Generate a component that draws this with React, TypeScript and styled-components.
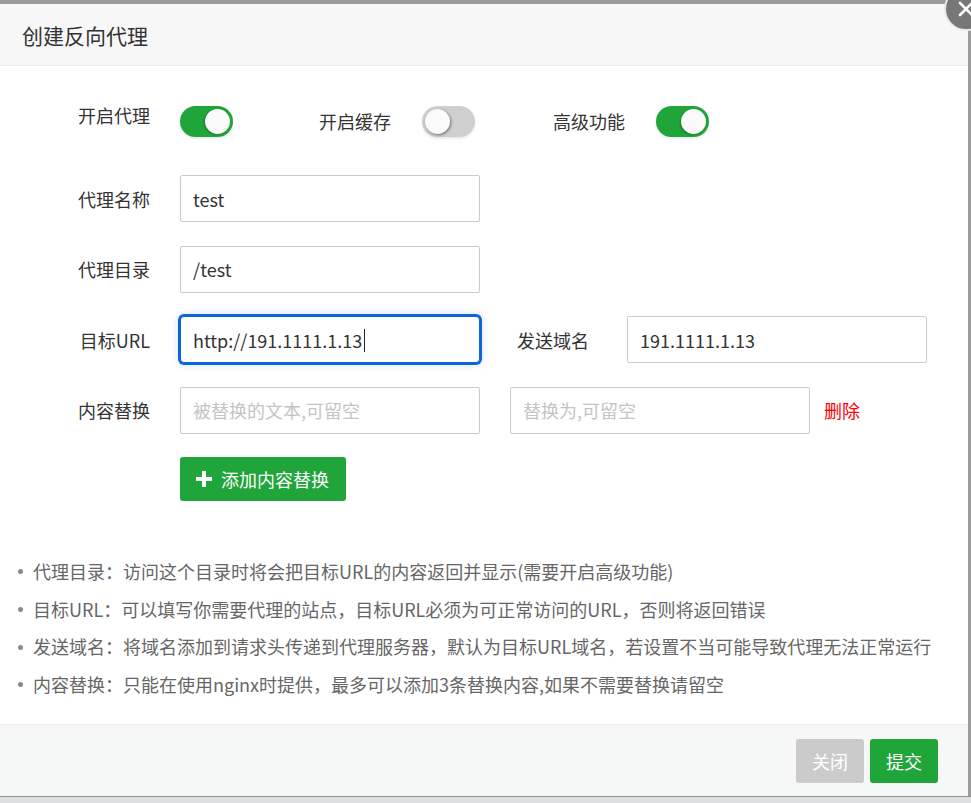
import React from "react";
import styled, { createGlobalStyle } from "styled-components";

const GlobalStyle = createGlobalStyle`
  html, body {
    margin: 0;
    padding: 0;
  }
  body {
    background: #9b9b9b;
    font-family: "Noto Sans CJK SC", "Noto Sans", sans-serif;
    color: #333;
  }
  * {
    box-sizing: border-box;
  }
`;

const notes = [
  "代理目录：访问这个目录时将会把目标URL的内容返回并显示(需要开启高级功能)",
  "目标URL：可以填写你需要代理的站点，目标URL必须为可正常访问的URL，否则将返回错误",
  "发送域名：将域名添加到请求头传递到代理服务器，默认为目标URL域名，若设置不当可能导致代理无法正常运行",
  "内容替换：只能在使用nginx时提供，最多可以添加3条替换内容,如果不需要替换请留空",
];

const Switch = ({ on }: { on: boolean }) => (
  <Track $on={on}>
    <Knob $on={on} />
  </Track>
);

const App = () => {
  return (
    <Page>
      <GlobalStyle />
      <Dialog>
        <Header>创建反向代理</Header>
        <CloseButton>
          <svg width="18" height="18" viewBox="0 0 18 18">
            <path d="M3 3L15 15M15 3L3 15" stroke="#fff" strokeWidth="2.6" strokeLinecap="round" />
          </svg>
        </CloseButton>

        <Body>
          <ToggleRow>
            <Label $lift>开启代理</Label>
            <Switch on={true} />
            <InlineLabel $left={86}>开启缓存</InlineLabel>
            <Switch on={false} />
            <InlineLabel $left={78}>高级功能</InlineLabel>
            <Switch on={true} />
          </ToggleRow>

          <Row>
            <Label>代理名称</Label>
            <Input defaultValue="test" />
          </Row>

          <Row>
            <Label>代理目录</Label>
            <Input defaultValue="/test" />
          </Row>

          <Row>
            <Label>目标URL</Label>
            <FieldWrap>
              <Input $focused defaultValue="http://191.1111.1.13" />
              <Caret />
            </FieldWrap>
            <InlineLabel $left={37} $right={38}>发送域名</InlineLabel>
            <Input defaultValue="191.1111.1.13" />
          </Row>

          <Row>
            <Label>内容替换</Label>
            <Input placeholder="被替换的文本,可留空" />
            <Input $left={30} placeholder="替换为,可留空" />
            <DeleteLink>删除</DeleteLink>
          </Row>

          <ButtonRow>
            <AddButton>
              <svg width="16" height="16" viewBox="0 0 16 16">
                <path d="M6 0h4v6h6v4h-6v6H6v-6H0V6h6z" fill="#fff" />
              </svg>
              添加内容替换
            </AddButton>
          </ButtonRow>

          <Notes>
            {notes.map((n) => (
              <Note key={n}>{n}</Note>
            ))}
          </Notes>
        </Body>

        <Footer>
          <FooterButton $muted>关闭</FooterButton>
          <FooterButton>提交</FooterButton>
        </Footer>
      </Dialog>
      <BottomStrip />
    </Page>
  );
};

const Page = styled.div`
  height: 803px;
  overflow: hidden;
  display: flex;
  flex-direction: column;
  padding-top: 4px;
`;

const Dialog = styled.div`
  position: relative;
  width: 968px;
  height: 792px;
  background: #fff;
  display: flex;
  flex-direction: column;
`;

const Header = styled.div`
  height: 62px;
  flex-shrink: 0;
  background: #f7f7f7;
  border-bottom: 1px solid #eaeaea;
  padding-left: 22px;
  display: flex;
  align-items: center;
  font-size: 21px;
  color: #333;
`;

const CloseButton = styled.div`
  position: absolute;
  top: -17px;
  right: -20px;
  width: 44px;
  height: 44px;
  border-radius: 50%;
  background: #777;
  border: 2px solid #e9e9e9;
  display: flex;
  align-items: center;
  justify-content: center;
`;

const Body = styled.div`
  flex: 1;
  padding: 40px 0 0 0;
`;

const ToggleRow = styled.div`
  display: flex;
  align-items: center;
  height: 30px;
  margin-bottom: 39px;
`;

const Row = styled.div`
  display: flex;
  align-items: center;
  height: 47px;
  margin-bottom: 23.5px;
`;

const Label = styled.div<{ $lift?: boolean }>`
  width: 150px;
  margin-right: 30px;
  text-align: right;
  font-size: 18px;
  line-height: 24px;
  color: #333;
  margin-bottom: ${(p) => (p.$lift ? "12px" : "0")};
`;

const InlineLabel = styled.div<{ $left: number; $right?: number }>`
  margin-left: ${(p) => p.$left}px;
  margin-right: ${(p) => p.$right ?? 31}px;
  font-size: 18px;
  line-height: 24px;
  color: #333;
  white-space: nowrap;
`;

const Track = styled.div<{ $on: boolean }>`
  position: relative;
  width: 53px;
  height: 31px;
  border-radius: 16px;
  background: ${(p) => (p.$on ? "#20a53a" : "#cfcfcf")};
  box-shadow: 0 2px 2px rgba(0, 0, 0, 0.08);
  flex-shrink: 0;
`;

const Knob = styled.span<{ $on: boolean }>`
  position: absolute;
  top: 3px;
  left: ${(p) => (p.$on ? "25px" : "3px")};
  width: 25px;
  height: 25px;
  border-radius: 50%;
  background: #fafafa;
  box-shadow: ${(p) =>
    p.$on ? "-1px 1px 2px rgba(0, 0, 0, 0.25)" : "1px 1px 3px rgba(0, 0, 0, 0.45)"};
`;

const FieldWrap = styled.div`
  position: relative;
  display: flex;
`;

const Caret = styled.span`
  position: absolute;
  left: 184px;
  top: 13px;
  width: 1px;
  height: 23px;
  background: #222;
`;

const Input = styled.input<{ $focused?: boolean; $left?: number }>`
  width: 300px;
  height: 47px;
  margin-left: ${(p) => p.$left ?? 0}px;
  padding: 0 12px;
  border: 1px solid ${(p) => (p.$focused ? "#0b63de" : "#cccccc")};
  border-radius: ${(p) => (p.$focused ? "4px" : "2px")};
  box-shadow: ${(p) =>
    p.$focused ? "0 0 0 2px #0b63de, 0 0 8px 2px rgba(11, 99, 222, 0.18)" : "none"};
  font-family: "Noto Sans CJK SC", "Noto Sans", sans-serif;
  font-size: 18px;
  color: #333;
  outline: none;
  background: #fff;

  &::placeholder {
    color: #c4c4c4;
  }
`;

const DeleteLink = styled.span`
  margin-left: 14px;
  font-size: 18px;
  color: #f00;
`;

const ButtonRow = styled.div`
  display: flex;
  padding-left: 180px;
`;

const AddButton = styled.button`
  display: flex;
  align-items: center;
  gap: 9px;
  height: 44px;
  padding: 0 17px 0 16px;
  border: none;
  border-radius: 3px;
  background: #20a53a;
  color: #fff;
  font-family: "Noto Sans CJK SC", "Noto Sans", sans-serif;
  font-size: 18px;
`;

const Notes = styled.ul`
  list-style: none;
  margin: 52px 0 0 0;
  padding: 0 0 0 18px;
`;

const Note = styled.li`
  display: flex;
  align-items: center;
  font-size: 18px;
  line-height: 37.7px;
  color: #666;
  white-space: nowrap;

  &::before {
    content: "";
    width: 5px;
    height: 5px;
    border-radius: 50%;
    background: #8a8a8a;
    margin-right: 10px;
    flex-shrink: 0;
  }
`;

const Footer = styled.div`
  height: 72px;
  flex-shrink: 0;
  border-top: 1px solid #ececec;
  background: #f6f7f7;
  display: flex;
  align-items: center;
  justify-content: flex-end;
  gap: 6px;
  padding-right: 30px;
`;

const FooterButton = styled.button<{ $muted?: boolean }>`
  width: 68px;
  height: 44px;
  border: none;
  border-radius: 3px;
  background: ${(p) => (p.$muted ? "#cbcbcb" : "#20a53a")};
  color: #fff;
  font-family: "Noto Sans CJK SC", "Noto Sans", sans-serif;
  font-size: 18px;
`;

const BottomStrip = styled.div`
  flex: 1;
  border-top: 1px solid #8e8e8e;
  background: #dde0e0;
`;

export default App;
